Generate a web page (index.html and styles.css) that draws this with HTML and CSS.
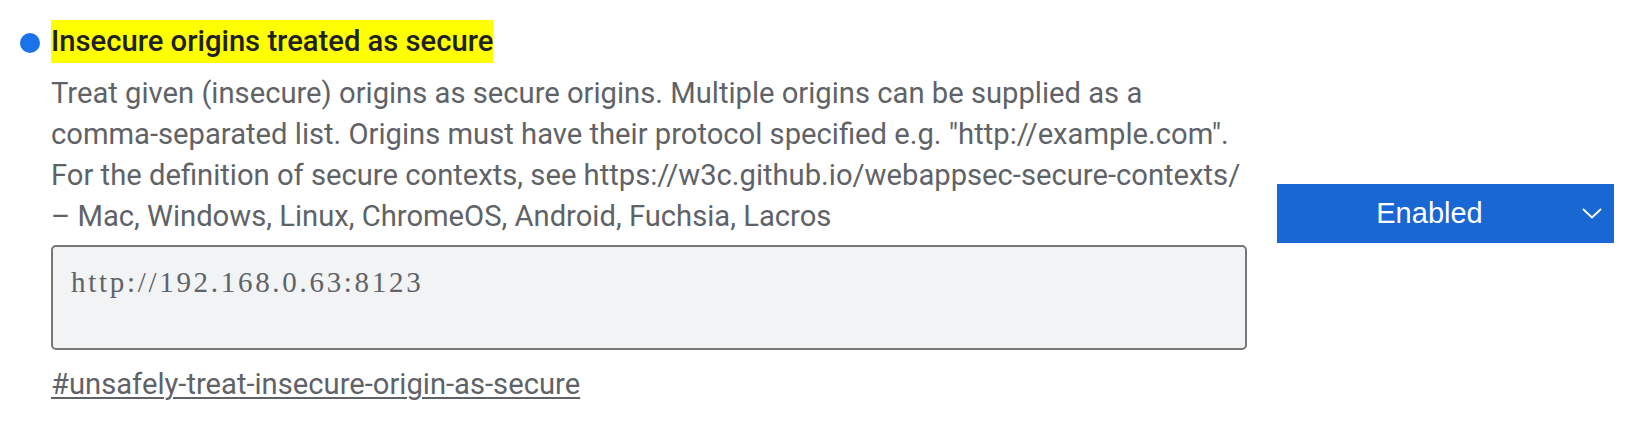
FILE: index.html
```html
<!DOCTYPE html>
<html lang="en">
<head>
<meta charset="utf-8">
<title>Insecure origins treated as secure</title>
<link rel="stylesheet" href="styles.css">
</head>
<body>
<div class="experiment">
  <div class="experiment-main">
    <div class="title-row">
      <span class="dot"></span>
      <h2 class="experiment-name"><mark class="match">Insecure origins treated as secure</mark></h2>
    </div>
    <div class="experiment-body">
      <p class="description">Treat given (insecure) origins as secure origins. Multiple origins can be supplied as a comma-separated list. Origins must have their protocol specified e.g. "http://example.com". For the definition of secure contexts, see https://w3c.github.io/webappsec-secure-contexts/ <span class="platforms">– Mac, Windows, Linux, ChromeOS, Android, Fuchsia, Lacros</span></p>
      <textarea class="origin-list" spellcheck="false">http://192.168.0.63:8123</textarea>
      <a class="permalink" href="#unsafely-treat-insecure-origin-as-secure">#unsafely-treat-insecure-origin-as-secure</a>
    </div>
  </div>
  <div class="select">
    <span class="select-label">Enabled</span>
    <svg class="chevron" width="20" height="11" viewBox="0 0 20 11" aria-hidden="true"><polyline points="1,1 10,9.5 19,1" fill="none" stroke="#ffffff" stroke-width="1.8"/></svg>
  </div>
</div>
</body>
</html>
```
FILE: styles.css
```css
html, body {
  margin: 0;
  padding: 0;
  background: #ffffff;
}

body {
  font-family: Roboto, "Liberation Sans", Arial, sans-serif;
}

.experiment {
  display: flex;
  align-items: center;
  gap: 30px;
  padding: 20px 19px 0 20px;
}

.experiment-main {
  flex: 1;
  min-width: 0;
}

.title-row {
  display: flex;
  align-items: center;
  gap: 11px;
}

.dot {
  width: 20px;
  height: 20px;
  border-radius: 50%;
  background: #1a73e8;
  flex: none;
  margin-top: 2px;
}

.experiment-name {
  margin: 0;
  font-size: 29.2px;
  font-weight: 500;
  color: #202124;
  line-height: 43px;
}

.match {
  display: inline-block;
  background: #ffff00;
  color: #202124;
  line-height: 43px;
}

.experiment-body {
  padding-left: 31px;
  display: flex;
  flex-direction: column;
  align-items: flex-start;
}

.description {
  margin: 10px 0 0 0;
  font-size: 29.2px;
  line-height: 41px;
  color: #5f6368;
}

.origin-list {
  display: block;
  box-sizing: border-box;
  width: 100%;
  height: 105px;
  margin: 8px 0 0 0;
  padding: 18px 18px 0 18px;
  border: 2px solid #767676;
  border-radius: 5px;
  background: #f1f3f4;
  color: #5f6368;
  font-family: "Liberation Serif", "Times New Roman", serif;
  font-size: 29px;
  line-height: 35px;
  letter-spacing: 2.7px;
  resize: none;
  outline: none;
  overflow: hidden;
}

.permalink {
  display: block;
  margin-top: 14px;
  font-size: 29.2px;
  line-height: 41px;
  color: #5f6368;
  text-decoration: underline;
  text-underline-offset: 3px;
  text-decoration-thickness: 1.5px;
}

.select {
  flex: none;
  width: 337px;
  height: 59px;
  box-sizing: border-box;
  background: #1967d2;
  display: flex;
  align-items: center;
  padding: 0 12px 0 0;
  margin-top: 1px;
}

.select-label {
  flex: 1;
  text-align: center;
  padding-left: 0;
  font-family: "Liberation Sans", Arial, sans-serif;
  font-size: 29px;
  color: #ffffff;
}

.chevron {
  flex: none;
  display: block;
}
```
